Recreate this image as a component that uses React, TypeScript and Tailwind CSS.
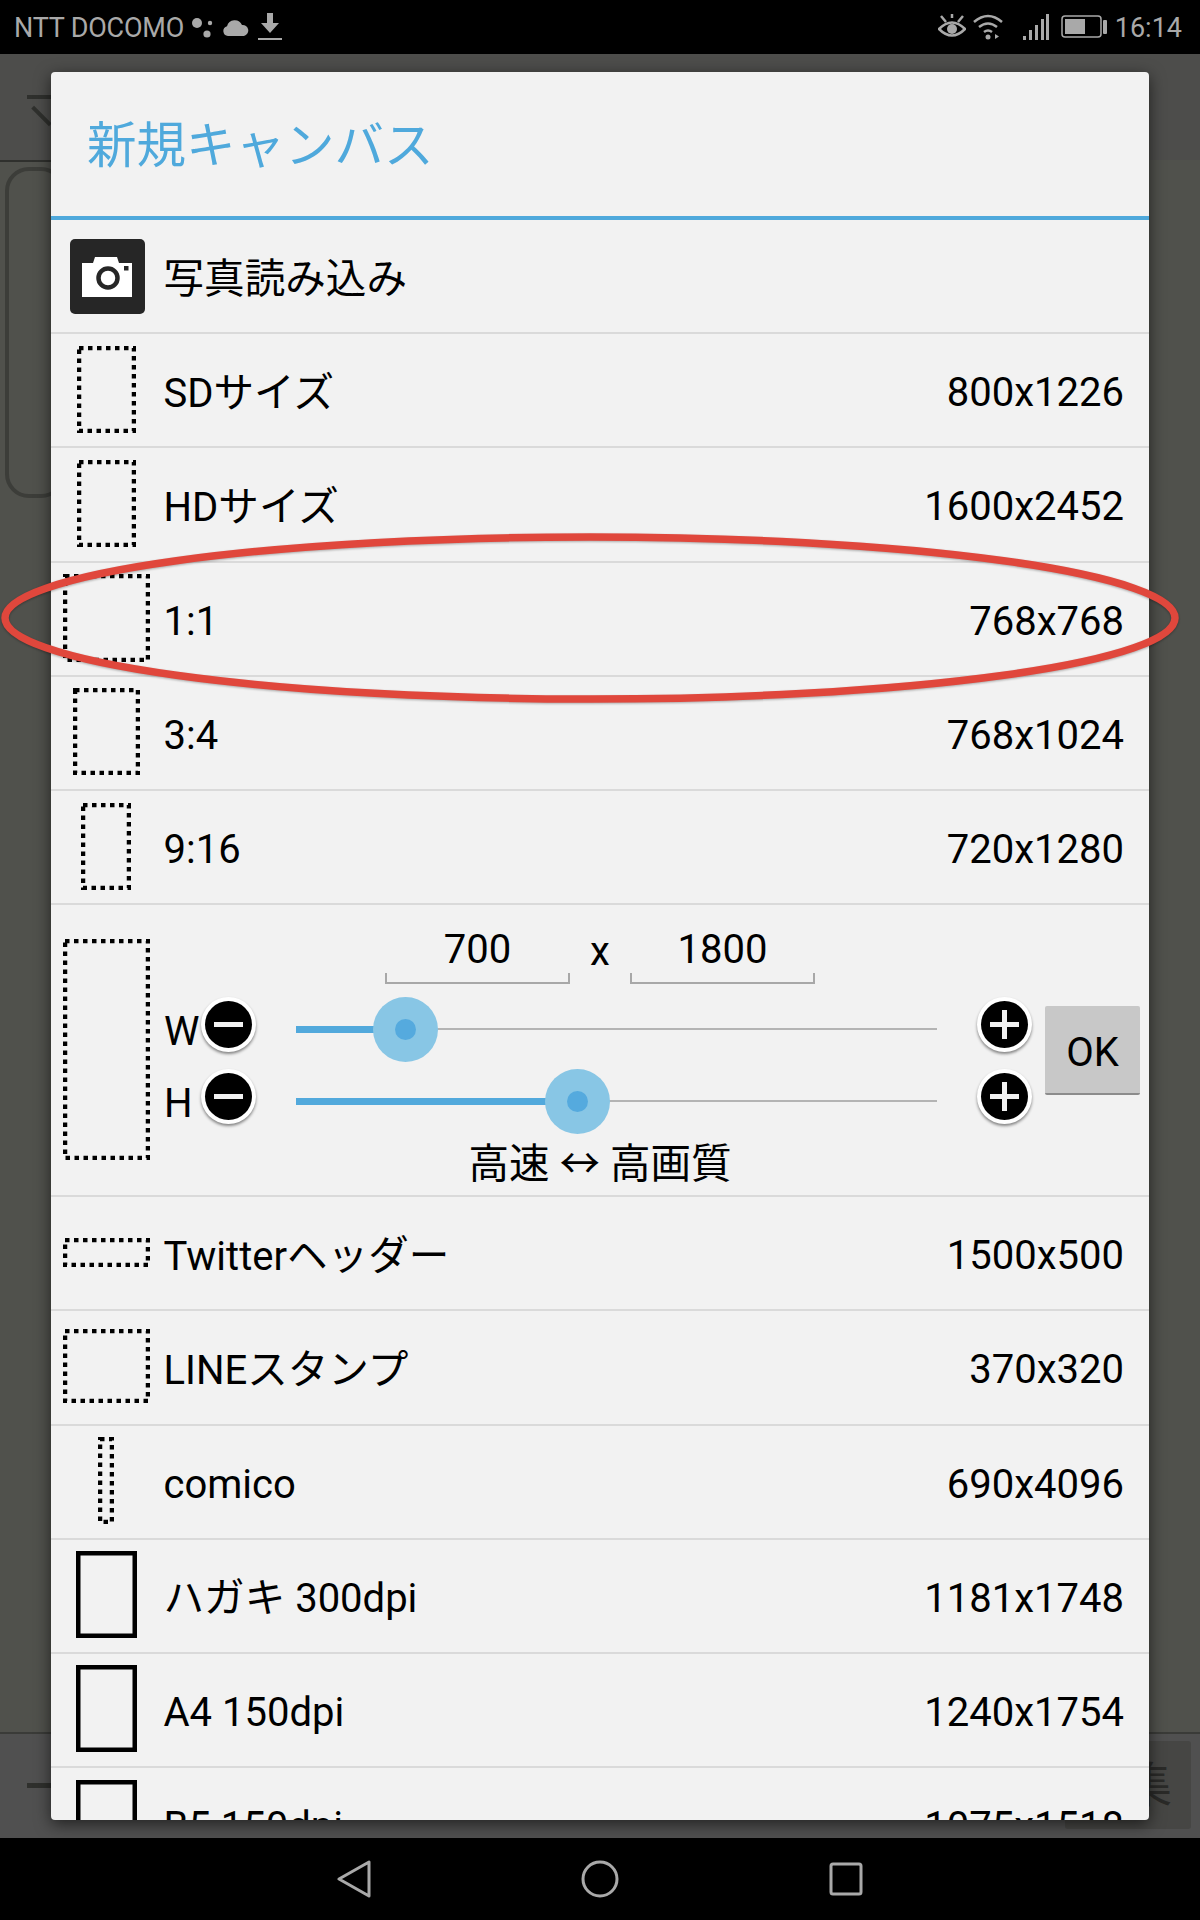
import type { ReactNode } from "react";

const FONT = "[font-family:Roboto,'Noto_Sans_CJK_JP',sans-serif]";

type Size = { w: number; h: number; dotted?: boolean };

// the little aspect-ratio previews on the left of each row
function Frame({ w, h, dotted = true }: Size) {
  return (
    <svg width={w} height={h} viewBox={`0 0 ${w} ${h}`} className="block">
      <rect
        x="2"
        y="2"
        width={w - 4}
        height={h - 4}
        fill="none"
        stroke="#000"
        strokeWidth={dotted ? 4.5 : 5}
        strokeDasharray={dotted ? "4.5 4.5" : undefined}
      />
    </svg>
  );
}

function CameraIcon() {
  return (
    <div className="ml-[2px] mt-[3px] grid size-[75px] place-items-center rounded-[5px] bg-[#262626]">
      <svg width="50" height="40" viewBox="0 0 50 40">
        <path d="M0 6h11l2-6h22l2 6h13v34H0z" fill="#fff" />
        <circle cx="26" cy="21" r="9.500" fill="none" stroke="#262626" strokeWidth="4.500" />
        <rect x="42" y="9" width="4.500" height="4.500" fill="#262626" />
      </svg>
    </div>
  );
}

// katakana and kanji sit a touch larger than the latin text on the device
function Ja({ children }: { children: ReactNode }) {
  return <span className="text-[40.600px]">{children}</span>;
}

function Row({ icon, label, size }: { icon: ReactNode; label: ReactNode; size?: string }) {
  return (
    <div className="flex h-[114.2px] shrink-0 items-center border-b-2 border-[#dadada] pr-[25px]">
      <div className="flex w-[110px] justify-center pb-[2px]">{icon}</div>
      <span className="ml-[2.500px] flex-1 pt-[6px]">{label}</span>
      {size && <span className="pt-[6px]">{size}</span>}
    </div>
  );
}

function RoundButton({ plus }: { plus?: boolean }) {
  return (
    <div className="mb-[10px] grid size-[55px] shrink-0 place-items-center rounded-full bg-white shadow-[0_2px_3px_rgba(0,0,0,0.45)]">
      <div className="relative size-[47px] rounded-full bg-black">
        <div className="absolute left-[9px] top-[21px] h-[5px] w-[29px] bg-[#f2f2f2]" />
        {plus && <div className="absolute left-[21px] top-[9px] h-[29px] w-[5px] bg-[#f2f2f2]" />}
      </div>
    </div>
  );
}

function Slider({ thumb }: { thumb: number }) {
  return (
    <div className="relative ml-[40px] h-[7px] w-[641px]">
      <div className="absolute inset-x-0 top-[2.5px] h-[2px] bg-[#b4b4b4]" />
      <div className="absolute left-0 top-0 h-[7px] bg-[#52a9dc]" style={{ width: thumb }} />
      <div
        className="absolute top-[-29px] grid size-[65px] place-items-center rounded-full bg-[#88c6e5]"
        style={{ left: thumb - 32 }}
      >
        <div className="size-[21px] rounded-full bg-[#55aade]" />
      </div>
    </div>
  );
}

function SizeField({ value }: { value: string }) {
  return (
    <div className="flex h-[58px] w-[185px] items-start justify-center border-x-2 border-b-2 border-[#a8a8a8] [border-image:linear-gradient(to_bottom,transparent_48px,#a8a8a8_48px)_1]">
      {value}
    </div>
  );
}

function SliderRow({ label, thumb }: { label: string; thumb: number }) {
  return (
    <div className="flex h-[72px] items-center">
      <span className="w-[37px] pt-[5px]">{label}</span>
      <RoundButton />
      <Slider thumb={thumb} />
      <div className="ml-[40px]">
        <RoundButton plus />
      </div>
    </div>
  );
}

function CustomRow() {
  return (
    <div className="flex h-[292px] shrink-0 border-b-2 border-[#dadada]">
      <div className="flex w-[110px] justify-center pt-[34px]">
        <Frame w={87} h={221} />
      </div>
      <div className="ml-[3px] flex flex-1 flex-col pt-[21px]">
        <div className="ml-[221px] flex items-start leading-[48px]">
          <SizeField value="700" />
          <span className="w-[60px] pt-[2px] text-center">x</span>
          <SizeField value="1800" />
        </div>
        <div className="mt-[9px] flex">
          <div className="w-[869px]">
            <SliderRow label="W" thumb={109} />
            <SliderRow label="H" thumb={281} />
          </div>
          <div className="ml-[12px] mt-[13px] flex h-[89px] w-[95px] items-center justify-center rounded-[2px] border-b-2 border-[#8c8c8c] bg-[#c8c8c8] pt-[7px]">
            OK
          </div>
        </div>
        <p className="mt-[3px] w-[872px] text-center text-[40.500px] leading-[48px]">高速 ↔ 高画質</p>
      </div>
    </div>
  );
}

export default function App() {
  return (
    <div className={`relative flex h-[1920px] w-[1200px] flex-col overflow-hidden bg-black ${FONT}`}>
      {/* status bar */}
      <div className="flex h-[54px] shrink-0 items-center pl-[14px] pr-[18px] text-[27px] text-[#a9a9a9]">
        <span className="pt-[3px] tracking-[-0.2px]">NTT DOCOMO</span>
        <svg width="22" height="26" viewBox="0 0 22 26" className="ml-[7px]" fill="#a9a9a9">
          <circle cx="6" cy="9" r="5" />
          <circle cx="19" cy="9" r="2.200" />
          <circle cx="16" cy="20" r="3.600" />
        </svg>
        <svg width="26" height="18" viewBox="0 0 26 18" className="ml-[10px]" fill="#a9a9a9">
          <path d="M5 18a5 5 0 0 1-1-9.800 8 8 0 0 1 15-1.200 5.600 5.600 0 0 1 2 11z" />
        </svg>
        <svg width="24" height="28" viewBox="0 0 24 28" className="ml-[9px]" fill="#a9a9a9">
          <path d="M9 0h6v10h6l-9 10-9-10h6zM0 25h24v2H0z" />
        </svg>
        <div className="flex-1" />
        <svg width="28" height="26" viewBox="0 0 28 26" fill="none" stroke="#a9a9a9" strokeWidth="2.500">
          <path d="M1 15q13-13 26 0q-13 13-26 0zM3 2l5 6M25 2l-5 6M14 0v4" />
          <circle cx="14" cy="15" r="5" fill="#a9a9a9" stroke="none" />
        </svg>
        <svg width="30" height="26" viewBox="0 0 30 26" className="ml-[7px]" fill="none" stroke="#a9a9a9" strokeWidth="2.500">
          <path d="M1 8q14-12 28 0M6 13q9-7 18 0M11 18q4-3 8 0" />
          <circle cx="15" cy="23" r="2.500" fill="#a9a9a9" stroke="none" />
          <path d="M22 20v5l4-2.500z" fill="#a9a9a9" stroke="none" />
        </svg>
        <svg width="26" height="26" viewBox="0 0 26 26" className="ml-[20px]" fill="#a9a9a9">
          <path d="M0 22h3v4H0zM6 16h3v10H6zM12 11h3v15h-3zM18 5h3v21h-3zM23 0h3v26h-3z" />
        </svg>
        <svg width="46" height="24" viewBox="0 0 46 24" className="ml-[12px]">
          <rect x="1" y="1" width="39" height="21" rx="3" fill="none" stroke="#a9a9a9" strokeWidth="1.500" />
          <rect x="4" y="4" width="20" height="15" fill="#a9a9a9" />
          <rect x="42" y="5" width="4" height="14" rx="1" fill="#a9a9a9" />
        </svg>
        <span className="ml-[8px] pt-[3px]">16:14</span>
      </div>

      {/* dimmed activity behind the dialog */}
      <div className="relative flex-1 bg-[#50514c]">
        <div className="absolute inset-x-0 top-0 h-[106px] bg-[#4d4d4b]" />
        <div className="absolute left-[27px] top-[41px] h-[4px] w-[24px] bg-[#2f302d]" />
        <div className="absolute left-[29px] top-[60px] h-[4px] w-[25px] rotate-45 bg-[#2f302d]" />
        <div className="absolute left-0 top-[106px] h-[2px] w-[51px] bg-[#2f302d]" />
        <div className="absolute left-[5px] top-[113px] h-[331px] w-[60px] rounded-[24px] border-4 border-[#3c3d39]" />
        <div className="absolute inset-x-0 bottom-0 top-[1678px] border-t-2 border-[#3a3b38] bg-[#505050]" />
        <div className="absolute left-[27px] top-[1729px] h-[5px] w-[26px] bg-[#2f302d]" />
        <div className="absolute left-[1065px] top-[1687px] h-[88px] w-[126px] rounded-[3px] bg-[#464644]" />
        <span className="absolute left-[1124px] top-[1708px] text-[48px] leading-none text-[#2a2a28]">集</span>

        {/* dialog */}
        <div className="absolute left-[51px] top-[18px] flex h-[1748px] w-[1098px] flex-col overflow-hidden rounded-[4px] bg-[#f2f2f2] text-[40px] leading-none text-black shadow-[0_4px_16px_rgba(0,0,0,0.6)]">
          <div className="flex h-[148px] shrink-0 items-center border-b-4 border-[#4fa9dc] pl-[36px] pt-[6px] text-[49.500px] text-[#4fa9dc]">
            新規キャンバス
          </div>
          <Row icon={<CameraIcon />} label={<Ja>写真読み込み</Ja>} />
          <Row icon={<Frame w={59} h={87} />} label={<>SD<Ja>サイズ</Ja></>} size="800x1226" />
          <Row icon={<Frame w={59} h={87} />} label={<>HD<Ja>サイズ</Ja></>} size="1600x2452" />
          <Row icon={<Frame w={87} h={88} />} label="1:1" size="768x768" />
          <Row icon={<Frame w={67} h={87} />} label="3:4" size="768x1024" />
          <Row icon={<Frame w={50} h={87} />} label="9:16" size="720x1280" />
          <CustomRow />
          <Row icon={<Frame w={87} h={29} />} label={<>Twitter<Ja>ヘッダー</Ja></>} size="1500x500" />
          <Row icon={<Frame w={87} h={74} />} label={<>LINE<Ja>スタンプ</Ja></>} size="370x320" />
          <Row icon={<Frame w={16} h={87} />} label="comico" size="690x4096" />
          <Row icon={<Frame w={61} h={87} dotted={false} />} label={<><Ja>ハガキ</Ja> 300dpi</>} size="1181x1748" />
          <Row icon={<Frame w={61} h={87} dotted={false} />} label="A4 150dpi" size="1240x1754" />
          <Row icon={<Frame w={61} h={87} dotted={false} />} label="B5 150dpi" size="1075x1518" />
        </div>
      </div>

      {/* nav bar */}
      <div className="flex h-[82px] shrink-0 items-center justify-center gap-[210px]">
        <svg width="34" height="38" viewBox="0 0 34 38" fill="none" stroke="#a9a9a9" strokeWidth="3" strokeLinejoin="round">
          <path d="M32 2v34L2 19z" />
        </svg>
        <svg width="38" height="38" viewBox="0 0 38 38" fill="none" stroke="#a9a9a9" strokeWidth="3">
          <circle cx="19" cy="19" r="17" />
        </svg>
        <svg width="34" height="34" viewBox="0 0 34 34" fill="none" stroke="#a9a9a9" strokeWidth="3">
          <rect x="2" y="2" width="30" height="30" rx="2" />
        </svg>
      </div>

      {/* red annotation drawn over the screenshot */}
      <svg className="pointer-events-none absolute left-0 top-0 drop-shadow-[0_1px_1px_rgba(0,0,0,0.3)]" width="1200" height="1920" viewBox="0 0 1200 1920" fill="none">
        <ellipse cx="590" cy="618" rx="585" ry="81" stroke="#e0473c" strokeWidth="7.500" />
      </svg>
    </div>
  );
}
